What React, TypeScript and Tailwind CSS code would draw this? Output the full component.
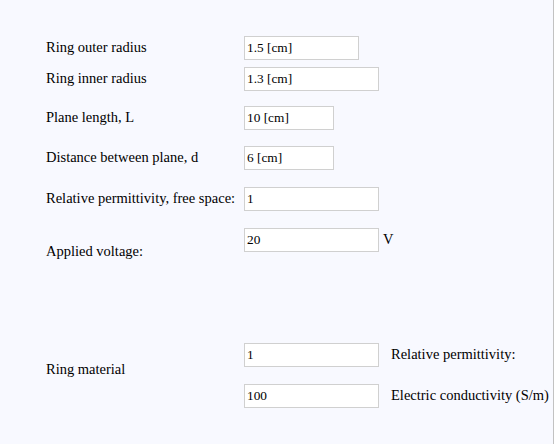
import React from "react";

type Row = { label: string; value: string; width: string; gap: string };

const rows: Row[] = [
  { label: "Ring outer radius", value: "1.5 [cm]", width: "w-[115px]", gap: "mt-0" },
  { label: "Ring inner radius", value: "1.3 [cm]", width: "w-[135px]", gap: "mt-[7px]" },
  { label: "Plane length, L", value: "10 [cm]", width: "w-[90px]", gap: "mt-[15px]" },
  { label: "Distance between plane, d", value: "6 [cm]", width: "w-[90px]", gap: "mt-[16px]" },
  { label: "Relative permittivity, free space:", value: "1", width: "w-[135px]", gap: "mt-[17px]" },
];

function Field({ value, width }: { value: string; width: string }) {
  return (
    <input
      defaultValue={value}
      className={`${width} h-[24px] border border-[#d0d0d0] bg-white pl-[2px] font-['Liberation_Serif',serif] text-[13.33px] text-black outline-none`}
    />
  );
}

export default function App() {
  return (
    <div className="w-[554px] h-[444px] bg-[#f8f9ff] border-r border-[#c2c2c2] pt-[36px] pl-[46px] font-['Liberation_Serif',serif] text-[14.5px] text-black">
      {rows.map((r) => (
        <div key={r.label} className={`flex items-center ${r.gap}`}>
          <div className="w-[198px] whitespace-nowrap">{r.label}</div>
          <Field value={r.value} width={r.width} />
        </div>
      ))}

      {/* applied voltage: label sits lower than the field */}
      <div className="flex items-start h-[24px] mt-[17px]">
        <div className="w-[198px] mt-[13px] whitespace-nowrap">Applied voltage:</div>
        <Field value="20" width="w-[135px]" />
        <span className="ml-[4px] mt-[1px]">V</span>
      </div>

      {/* ring material */}
      <div className="flex items-center mt-[91px]">
        <div className="w-[198px] pb-[11px] whitespace-nowrap">Ring material</div>
        <div className="flex flex-col gap-[17px]">
          <div className="flex items-center gap-[12px]">
            <Field value="1" width="w-[135px]" />
            <span className="whitespace-nowrap">Relative permittivity:</span>
          </div>
          <div className="flex items-center gap-[12px]">
            <Field value="100" width="w-[135px]" />
            <span className="whitespace-nowrap">Electric conductivity (S/m)</span>
          </div>
        </div>
      </div>
    </div>
  );
}
